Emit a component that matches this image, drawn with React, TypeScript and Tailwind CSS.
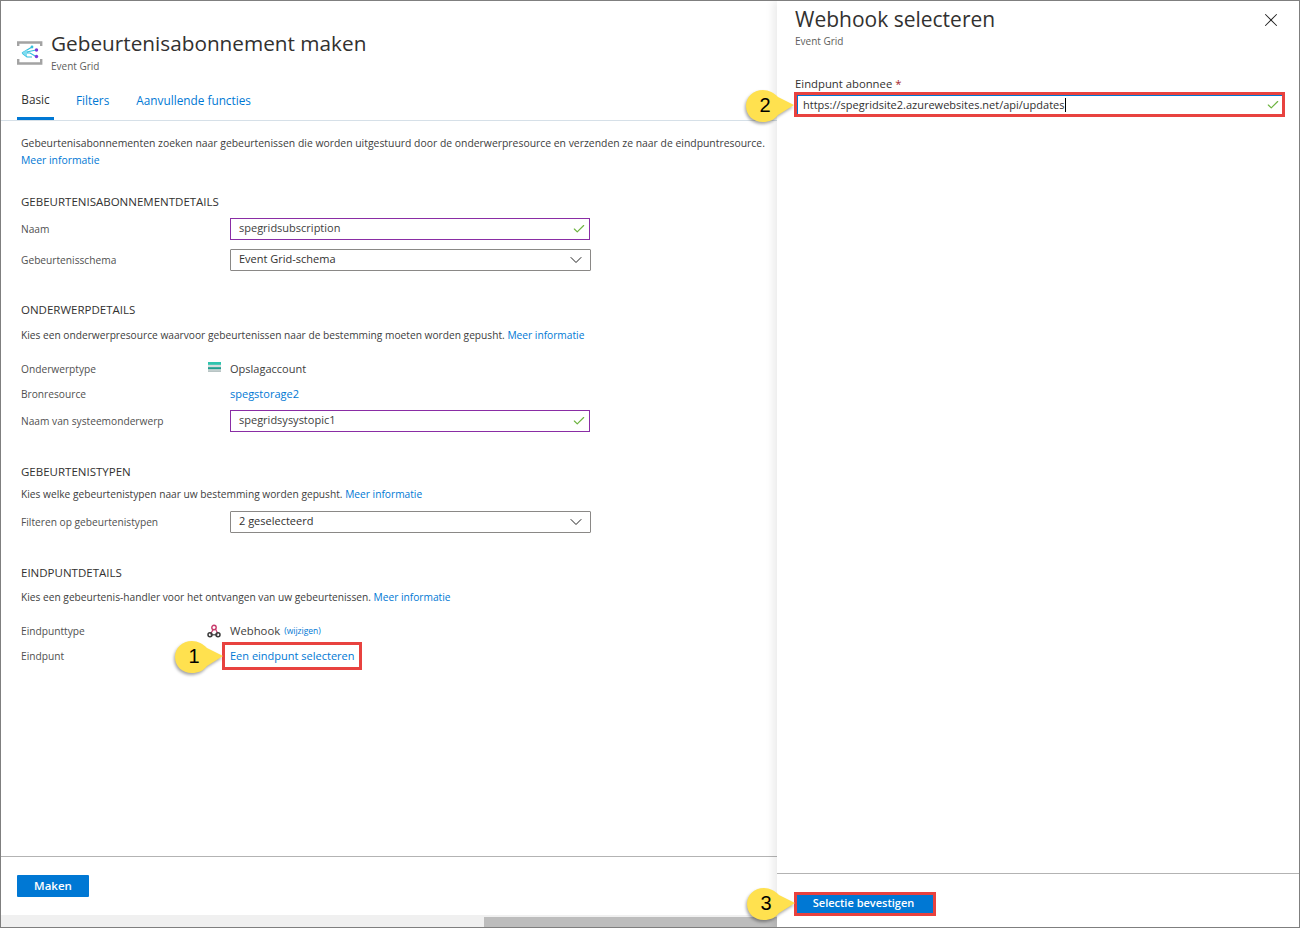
import type { ReactNode } from "react";
import { Check, ChevronDown, X } from "lucide-react";

const font = "font-['Open_Sans','Noto_Sans',sans-serif]";

function EventGridIcon() {
  return (
    <svg width="26" height="24" viewBox="0 0 26 24" className="shrink-0">
      <path d="M1.2 5V1.5h23V5M1.2 18v4.5h23V18" fill="none" stroke="#a3a3a3" strokeWidth="2.4" />
      <path d="M5 12 15 6M5 12 19 9M5 12h8l6 3.5M5 12l5 4h5" fill="none" stroke="#32bedd" strokeWidth="1.2" />
      <path d="M5 12l5-3.5v7z" fill="#7fdcf0" />
      <circle cx="15" cy="6" r="1.4" fill="#32bedd" />
      <circle cx="19.5" cy="9" r="1.7" fill="#773adc" />
      <circle cx="19.5" cy="15.5" r="1.7" fill="#773adc" />
    </svg>
  );
}

function StorageIcon() {
  return (
    <svg width="13" height="10" viewBox="0 0 13 10">
      <rect width="13" height="10" fill="#d5dddd" />
      <rect width="13" height="2.8" fill="#2fc4ae" />
      <rect y="5.2" width="13" height="2" fill="#1f9d8e" />
      <rect y="8.4" width="13" height="1.6" fill="#b8c4c4" />
    </svg>
  );
}

function WebhookIcon() {
  return (
    <svg width="14" height="14" viewBox="0 0 14 14" fill="none">
      <path d="M6.5 5 3.5 10" stroke="#c73a6b" strokeWidth="1.3" />
      <path d="M3.5 10.8h7" stroke="#444" strokeWidth="1.2" />
      <path d="M8.2 4.5l2.6 5" stroke="#c73a6b" strokeWidth="1.2" />
      <circle cx="7" cy="3.5" r="2.2" stroke="#c73a6b" strokeWidth="1.4" />
      <circle cx="3" cy="10.8" r="2" stroke="#3a3a3a" strokeWidth="1.5" />
      <circle cx="11" cy="10.8" r="2" stroke="#3a3a3a" strokeWidth="1.5" />
    </svg>
  );
}

function Callout({ n, className }: { n: number; className: string }) {
  return (
    <div className={`absolute z-20 h-[36px] w-[52px] ${className}`}>
      <svg width="52" height="36" viewBox="0 0 52 36" className="absolute left-0 top-0 drop-shadow-[-1px_2px_1.5px_rgba(0,0,0,0.35)]">
        <path d="M18 1C24 1 29 4 33 8L49 16 33 26C29 31 24 33 18 33 8 33 1 26 1 17 1 8 8 1 18 1Z" fill="#ffe14f" />
      </svg>
      <span className="absolute left-[3px] top-[4px] w-[34px] text-center font-['Liberation_Sans',sans-serif] text-[20px] leading-[24px] text-black">
        {n}
      </span>
    </div>
  );
}

function A({ children }: { children: ReactNode }) {
  return <span className="text-[#0078d4]">{children}</span>;
}

function SectionTitle({ children, className }: { children: ReactNode; className: string }) {
  return <div className={`text-[11.5px] leading-[16px] text-[#323130] ${className}`}>{children}</div>;
}

function Desc({ children, className }: { children: ReactNode; className: string }) {
  return <div className={`text-[10.2px] leading-[16px] text-[#404040] ${className}`}>{children}</div>;
}

function Row({ label, h, className, children }: { label: string; h: string; className: string; children: ReactNode }) {
  return (
    <div className={`flex items-center ${h} ${className}`}>
      <div className="mt-[2px] w-[209px] shrink-0 text-[10.2px] text-[#505050]">{label}</div>
      {children}
    </div>
  );
}

function TextField({ value }: { value: string }) {
  return (
    <div className="flex h-[22px] w-[360px] items-center justify-between border border-[#8a2da5] pl-2 pr-[3px] text-[11px] text-[#404040]">
      <span className="pb-[1px]">{value}</span>
      <Check size={14} className="text-[#6db33f]" strokeWidth={2} />
    </div>
  );
}

function Dropdown({ value }: { value: string }) {
  return (
    <div className="flex h-[22px] w-[361px] items-center justify-between rounded-[1px] border border-[#8a8886] pl-2 pr-[4px] text-[11px] text-[#323130]">
      <span className="pb-[1px]">{value}</span>
      <ChevronDown size={20} className="text-[#222]" strokeWidth={1.2} />
    </div>
  );
}

function LeftPanel() {
  return (
    <div className="flex w-[776px] shrink-0 flex-col">
      <div className="flex h-[77px] items-start pl-4 pt-[28px]">
        <div className="mt-[12px]">
          <EventGridIcon />
        </div>
        <div className="ml-2">
          <div className="text-[20.75px] leading-[28px] text-[#323130]">Gebeurtenisabonnement maken</div>
          <div className="mt-[2px] text-[10px] leading-[14px] text-[#605e5c]">Event Grid</div>
        </div>
      </div>
      <div className="flex h-[43px] border-b border-[#d6e0e8] pl-4 text-[11.8px]">
        <div className="flex h-[42px] w-[37px] items-center justify-center border-b-[3px] border-[#0078d4] pt-[5px] text-[#323130]">Basic</div>
        <div className="ml-[22px] flex h-[42px] items-center pt-[4px] text-[#0078d4]">Filters</div>
        <div className="ml-[27px] flex h-[42px] items-center pt-[4px] text-[#0078d4]">Aanvullende functies</div>
      </div>
      <div className="flex-1 pl-5">
        <div className="mt-[14px] text-[10.4px] leading-[17px] text-[#404040]">
          Gebeurtenisabonnementen zoeken naar gebeurtenissen die worden uitgestuurd door de onderwerpresource en verzenden ze naar de eindpuntresource.
          <div className="text-[#0078d4]">Meer informatie</div>
        </div>
        <SectionTitle className="mt-[25px]">GEBEURTENISABONNEMENTDETAILS</SectionTitle>
        <Row label="Naam" h="h-[22px]" className="mt-[8px]"><TextField value="spegridsubscription" /></Row>
        <Row label="Gebeurtenisschema" h="h-[22px]" className="mt-[9px]"><Dropdown value="Event Grid-schema" /></Row>
        <SectionTitle className="mt-[31px]">ONDERWERPDETAILS</SectionTitle>
        <Desc className="mt-[9px]">
          Kies een onderwerpresource waarvoor gebeurtenissen naar de bestemming moeten worden gepusht. <A>Meer informatie</A>
        </Desc>
        <Row label="Onderwerptype" h="h-[18px]" className="mt-[17px]">
          <div className="flex items-center text-[11px] text-[#404040]">
            <span className="-ml-[22px] mr-[9px] -mt-[4px] flex"><StorageIcon /></span>
            Opslagaccount
          </div>
        </Row>
        <Row label="Bronresource" h="h-[18px]" className="mt-[7px]">
          <span className="text-[11px] text-[#0078d4]">spegstorage2</span>
        </Row>
        <Row label="Naam van systeemonderwerp" h="h-[22px]" className="mt-[7px]"><TextField value="spegridsysystopic1" /></Row>
        <SectionTitle className="mt-[32px]">GEBEURTENISTYPEN</SectionTitle>
        <Desc className="mt-[6px]">
          Kies welke gebeurtenistypen naar uw bestemming worden gepusht. <A>Meer informatie</A>
        </Desc>
        <Row label="Filteren op gebeurtenistypen" h="h-[22px]" className="mt-[9px]"><Dropdown value="2 geselecteerd" /></Row>
        <SectionTitle className="mt-[32px]">EINDPUNTDETAILS</SectionTitle>
        <Desc className="mt-[8px]">
          Kies een gebeurtenis-handler voor het ontvangen van uw gebeurtenissen. <A>Meer informatie</A>
        </Desc>
        <Row label="Eindpunttype" h="h-[18px]" className="mt-[17px]">
          <div className="flex items-center text-[11.3px] text-[#404040]">
            <span className="-ml-[23px] mr-[9px] -mt-[1px] flex"><WebhookIcon /></span>
            Webhook
            <span className="ml-[4px] text-[8.5px] text-[#0078d4]">(wijzigen)</span>
          </div>
        </Row>
        <Row label="Eindpunt" h="h-[28px]" className="mt-[2px]">
          <div className="-ml-[8px] flex h-[28px] items-center border-[3px] border-[#e8423f] pl-[5px] pr-[5px] text-[11px] text-[#0078d4]">
            Een eindpunt selecteren
          </div>
        </Row>
      </div>
      <div className="flex h-[59px] items-start border-t border-[#b3b3b3] pl-4 pt-[18px]">
        <div className="flex h-[22px] w-[72px] items-center justify-center rounded-[1px] bg-[#0078d4] text-[11.5px] font-semibold text-white">Maken</div>
      </div>
      <div className="h-[12px] bg-[#f0f0f0] pl-[483px]">
        <div className="h-[10px] mt-[2px] bg-[#bdbdbd]" />
      </div>
    </div>
  );
}

function RightPanel() {
  return (
    <div className="z-10 flex flex-1 flex-col bg-white shadow-[-4px_0_8px_rgba(0,0,0,0.08)]">
      <div className="flex-1 pl-[17px] pr-[14px]">
        <div className="flex items-start justify-between pt-[4px] pl-[1px]">
          <div className="text-[21px] leading-[28px] text-[#323130]">Webhook selecteren</div>
          <X size={22} className="mt-[4px] mr-[3px] text-[#222]" strokeWidth={1.1} />
        </div>
        <div className="mt-[1px] pl-[1px] text-[10px] leading-[14px] text-[#605e5c]">Event Grid</div>
        <div className="mt-[28px] pl-[1px] text-[11.3px] leading-[16px] font-medium text-[#323130]">
          Eindpunt abonnee <span className="text-[#a4262c]">*</span>
        </div>
        <div className="h-[25px] w-[491px] border-[3px] border-[#e8423f]">
          <div className="flex h-[19px] items-center justify-between border-t border-l border-[#0078d4] pl-[5px] pr-[2px] text-[11px] text-[#323130]">
            <span className="border-r border-black leading-[14px]">https://spegridsite2.azurewebsites.net/api/updates</span>
            <Check size={14} className="text-[#6db33f]" strokeWidth={2} />
          </div>
        </div>
      </div>
      <div className="h-[54px] border-t border-[#b3b3b3] pl-[17px] pt-[18px]">
        <div className="flex h-[24px] w-[142px] items-center justify-center border-[3px] border-[#e8423f] bg-[#0078d4] pb-[2px] pr-[3px] text-[11px] font-semibold text-white">
          Selectie bevestigen
        </div>
      </div>
    </div>
  );
}

export default function App() {
  return (
    <div className={`relative flex h-[928px] w-[1300px] overflow-hidden border border-[#7f7f7f] bg-white ${font}`}>
      <LeftPanel />
      <RightPanel />
      <Callout n={1} className="left-[173px] top-[639px]" />
      <Callout n={2} className="left-[744px] top-[88px]" />
      <Callout n={3} className="left-[745px] top-[886px]" />
    </div>
  );
}
